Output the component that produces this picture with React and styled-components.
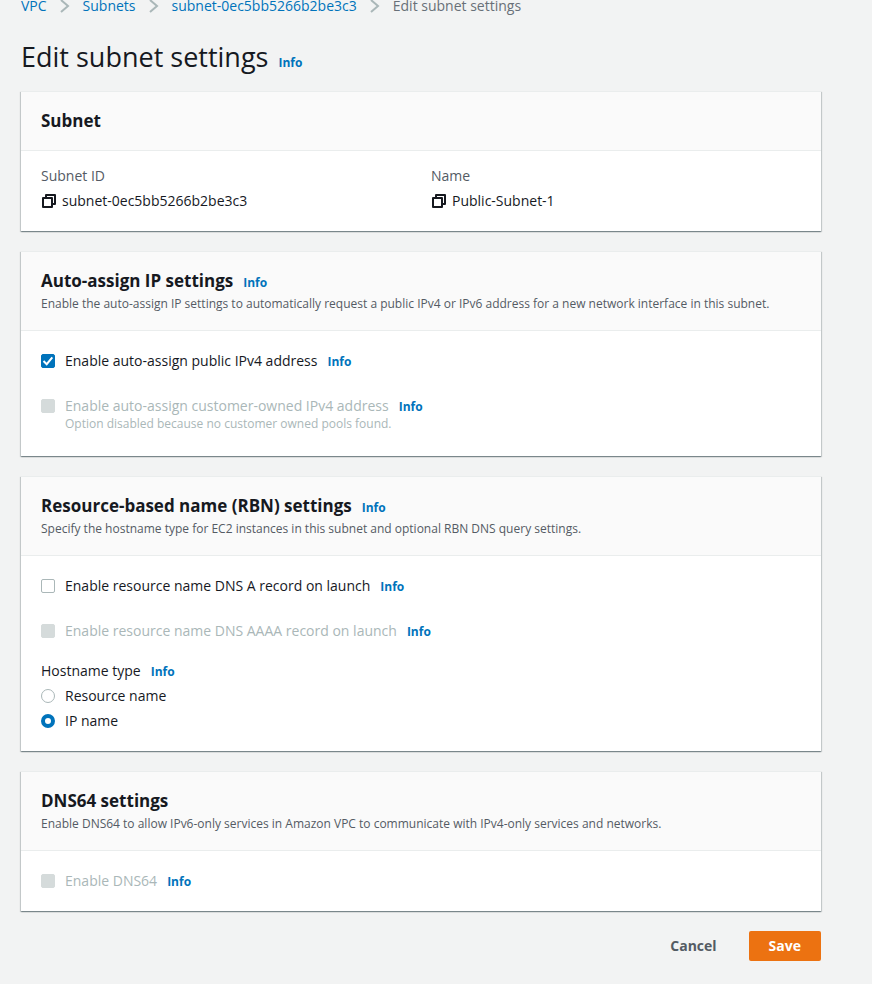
import React, { useState } from "react";
import styled, { createGlobalStyle } from "styled-components";

const colors = {
  page: "#f2f3f3",
  text: "#16191f",
  secondary: "#545b64",
  muted: "#687078",
  disabled: "#aab7b8",
  disabledFill: "#d5dbdb",
  link: "#0073bb",
  divider: "#eaeded",
  accent: "#ec7211",
};

const GlobalStyle = createGlobalStyle`
  *, *::before, *::after { box-sizing: border-box; }
  body {
    margin: 0;
    background: ${colors.page};
    color: ${colors.text};
    font: 400 14px/20px "Open Sans", "Noto Sans", sans-serif;
  }
`;

const Page = styled.main`
  padding: 0 51px 20px 21px;
`;

const Breadcrumbs = styled.ol`
  display: flex;
  align-items: center;
  height: 12px;
  margin: 0;
  padding: 0;
  list-style: none;
  line-height: 12px;
  white-space: nowrap;
`;

const Crumb = styled.li`
  display: flex;
  align-items: center;
  color: ${colors.muted};
`;

const CrumbLink = styled.a`
  color: ${colors.link};
  text-decoration: none;
`;

const Chevron = styled.svg`
  width: 10px;
  height: 14px;
  margin: 0 13px 0 13px;
  fill: none;
  stroke: ${colors.disabled};
  stroke-width: 2;
`;

const PageTitle = styled.h1`
  margin: 0;
  font-size: 27px;
  line-height: 36px;
  font-weight: 400;
`;

const TitleRow = styled.div`
  display: flex;
  align-items: baseline;
  gap: 10px;
  margin: 27px 0 16px;
`;

const InfoLink = styled.a`
  color: ${colors.link};
  font-size: 12px;
  line-height: 16px;
  font-weight: 700;
  text-decoration: none;
`;

const Stack = styled.div`
  display: grid;
  gap: 20px;
`;

const Card = styled.section`
  background: #fff;
  border-top: 1px solid ${colors.divider};
  box-shadow: 0 1px 1px 0 rgba(0, 28, 36, 0.3), 1px 1px 1px 0 rgba(0, 28, 36, 0.15),
    -1px 1px 1px 0 rgba(0, 28, 36, 0.15);
`;

const CardHeader = styled.header`
  padding: 18px 20px;
  background: #fafafa;
  border-bottom: 1px solid ${colors.divider};
`;

const CardHeading = styled.div`
  display: flex;
  align-items: baseline;
  gap: 10px;
`;

const CardTitle = styled.h2`
  margin: 0;
  font-size: 17px;
  line-height: 22px;
  font-weight: 700;
`;

const CardDescription = styled.p`
  margin: 4px 0 0;
  color: ${colors.secondary};
  font-size: 12px;
  line-height: 16px;
`;

const CardBody = styled.div`
  padding: 20px;
`;

const Details = styled.dl`
  display: grid;
  grid-template-columns: 1fr 1fr;
  gap: 20px;
  margin: 0;
  padding: 15px 20px 20px;
`;

const DetailLabel = styled.dt`
  color: ${colors.secondary};
`;

const DetailValue = styled.dd`
  display: flex;
  align-items: center;
  gap: 5px;
  margin: 5px 0 0;
`;

const CopyButton = styled.button`
  display: flex;
  padding: 1px;
  border: 0;
  background: none;
  color: inherit;
  cursor: pointer;
`;

const CopyGlyph = styled.svg`
  width: 14px;
  height: 14px;
  fill: none;
  stroke: currentColor;
  stroke-width: 2;
  stroke-linejoin: round;
`;

const Options = styled.div`
  display: grid;
  gap: 25px;
`;

const OptionRow = styled.div`
  display: grid;
  grid-template-columns: 14px 1fr;
  column-gap: 10px;
  align-items: center;
`;

const OptionText = styled.div`
  display: flex;
  align-items: baseline;
  gap: 10px;
`;

const OptionLabel = styled.label`
  color: ${(p) => (p.$disabled ? colors.disabled : colors.text)};
`;

const OptionHint = styled.p`
  grid-column: 2;
  margin: 0 0 4px;
  color: ${colors.disabled};
  font-size: 12px;
  line-height: 16px;
`;

const Checkbox = styled.input`
  appearance: none;
  width: 14px;
  height: 14px;
  margin: 0;
  border: 1px solid ${colors.disabled};
  border-radius: 2px;
  background: #fff;

  &:checked {
    border-color: ${colors.link};
    background: ${colors.link};
  }

  &:disabled {
    border-color: ${colors.disabledFill};
    background: ${colors.disabledFill};
  }
`;

const CheckboxCell = styled.span`
  display: grid;

  & > * {
    grid-area: 1 / 1;
  }
`;

const Tick = styled.svg`
  width: 14px;
  height: 14px;
  fill: none;
  stroke: #fff;
  stroke-width: 2;
  pointer-events: none;
`;

const RadioGroup = styled.fieldset`
  display: grid;
  gap: 5px;
  margin: 20px 0 0;
  padding: 0;
  border: 0;
`;

const RadioLegend = styled.legend`
  display: flex;
  align-items: baseline;
  gap: 10px;
  margin-bottom: 5px;
  padding: 0;
`;

const Radio = styled.input`
  appearance: none;
  width: 14px;
  height: 14px;
  margin: 0;
  border: 1px solid ${colors.disabled};
  border-radius: 50%;
  background: #fff;

  &:checked {
    border: 4px solid ${colors.link};
  }
`;

const Actions = styled.div`
  display: flex;
  justify-content: flex-end;
  gap: 12px;
  margin-top: 20px;
`;

const Button = styled.button`
  height: 30px;
  padding: 0 20px;
  border: 0;
  border-radius: 2px;
  background: ${(p) => (p.$primary ? colors.accent : "transparent")};
  color: ${(p) => (p.$primary ? "#fff" : colors.secondary)};
  font: inherit;
  font-weight: 700;
  cursor: pointer;
`;

const Info = () => <InfoLink href="#info">Info</InfoLink>;

const crumbs = ["VPC", "Subnets", "subnet-0ec5bb5266b2be3c3"];

function Panel({ title, description, info, children }) {
  return (
    <Card>
      <CardHeader>
        <CardHeading>
          <CardTitle>{title}</CardTitle>
          {info && <Info />}
        </CardHeading>
        {description && <CardDescription>{description}</CardDescription>}
      </CardHeader>
      {children}
    </Card>
  );
}

function Detail({ label, value }) {
  return (
    <div>
      <DetailLabel>{label}</DetailLabel>
      <DetailValue>
        <CopyButton type="button" aria-label={`Copy ${label}`}>
          <CopyGlyph viewBox="0 0 14 14" aria-hidden="true">
            <path d="M1 4h9v9H1z" />
            <path d="M4 4V1h9v9h-3" />
          </CopyGlyph>
        </CopyButton>
        {value}
      </DetailValue>
    </div>
  );
}

function CheckOption({ id, label, hint, disabled, defaultChecked = false }) {
  const [checked, setChecked] = useState(defaultChecked);
  return (
    <OptionRow>
      <CheckboxCell>
        <Checkbox
          type="checkbox"
          id={id}
          disabled={disabled}
          checked={checked}
          onChange={(e) => setChecked(e.target.checked)}
        />
        {checked && (
          <Tick viewBox="0 0 14 14" aria-hidden="true">
            <path d="M2.5 7l3.2 3.2L11.3 3.4" />
          </Tick>
        )}
      </CheckboxCell>
      <OptionText>
        <OptionLabel htmlFor={id} $disabled={disabled}>{label}</OptionLabel>
        <Info />
      </OptionText>
      {hint && <OptionHint>{hint}</OptionHint>}
    </OptionRow>
  );
}

function RadioOption({ id, label, value, current, onSelect }) {
  return (
    <OptionRow>
      <Radio
        type="radio"
        id={id}
        name="hostname-type"
        checked={current === value}
        onChange={() => onSelect(value)}
      />
      <OptionLabel htmlFor={id}>{label}</OptionLabel>
    </OptionRow>
  );
}

export default function App() {
  const [hostname, setHostname] = useState("ip");
  return (
    <Page>
      <GlobalStyle />
      <nav aria-label="Breadcrumbs">
        <Breadcrumbs>
          {crumbs.map((name) => (
            <Crumb key={name}>
              <CrumbLink href="#">{name}</CrumbLink>
              <Chevron viewBox="0 0 10 14" aria-hidden="true">
                <path d="M1 1l7 6-7 6" />
              </Chevron>
            </Crumb>
          ))}
          <Crumb aria-current="page">Edit subnet settings</Crumb>
        </Breadcrumbs>
      </nav>

      <TitleRow>
        <PageTitle>Edit subnet settings</PageTitle>
        <Info />
      </TitleRow>

      <Stack>
        <Panel title="Subnet">
          <Details>
            <Detail label="Subnet ID" value="subnet-0ec5bb5266b2be3c3" />
            <Detail label="Name" value="Public-Subnet-1" />
          </Details>
        </Panel>

        <Panel
          title="Auto-assign IP settings"
          info
          description="Enable the auto-assign IP settings to automatically request a public IPv4 or IPv6 address for a new network interface in this subnet."
        >
          <CardBody>
            <Options>
              <CheckOption id="public-ipv4" label="Enable auto-assign public IPv4 address" defaultChecked />
              <CheckOption
                id="customer-ipv4"
                label="Enable auto-assign customer-owned IPv4 address"
                hint="Option disabled because no customer owned pools found."
                disabled
              />
            </Options>
          </CardBody>
        </Panel>

        <Panel
          title="Resource-based name (RBN) settings"
          info
          description="Specify the hostname type for EC2 instances in this subnet and optional RBN DNS query settings."
        >
          <CardBody>
            <Options>
              <CheckOption id="dns-a" label="Enable resource name DNS A record on launch" />
              <CheckOption id="dns-aaaa" label="Enable resource name DNS AAAA record on launch" disabled />
            </Options>
            <RadioGroup>
              <RadioLegend>
                Hostname type <Info />
              </RadioLegend>
              <RadioOption id="host-resource" label="Resource name" value="resource" current={hostname} onSelect={setHostname} />
              <RadioOption id="host-ip" label="IP name" value="ip" current={hostname} onSelect={setHostname} />
            </RadioGroup>
          </CardBody>
        </Panel>

        <Panel
          title="DNS64 settings"
          description="Enable DNS64 to allow IPv6-only services in Amazon VPC to communicate with IPv4-only services and networks."
        >
          <CardBody>
            <CheckOption id="dns64" label="Enable DNS64" disabled />
          </CardBody>
        </Panel>
      </Stack>

      <Actions>
        <Button type="button">Cancel</Button>
        <Button type="submit" $primary>Save</Button>
      </Actions>
    </Page>
  );
}
